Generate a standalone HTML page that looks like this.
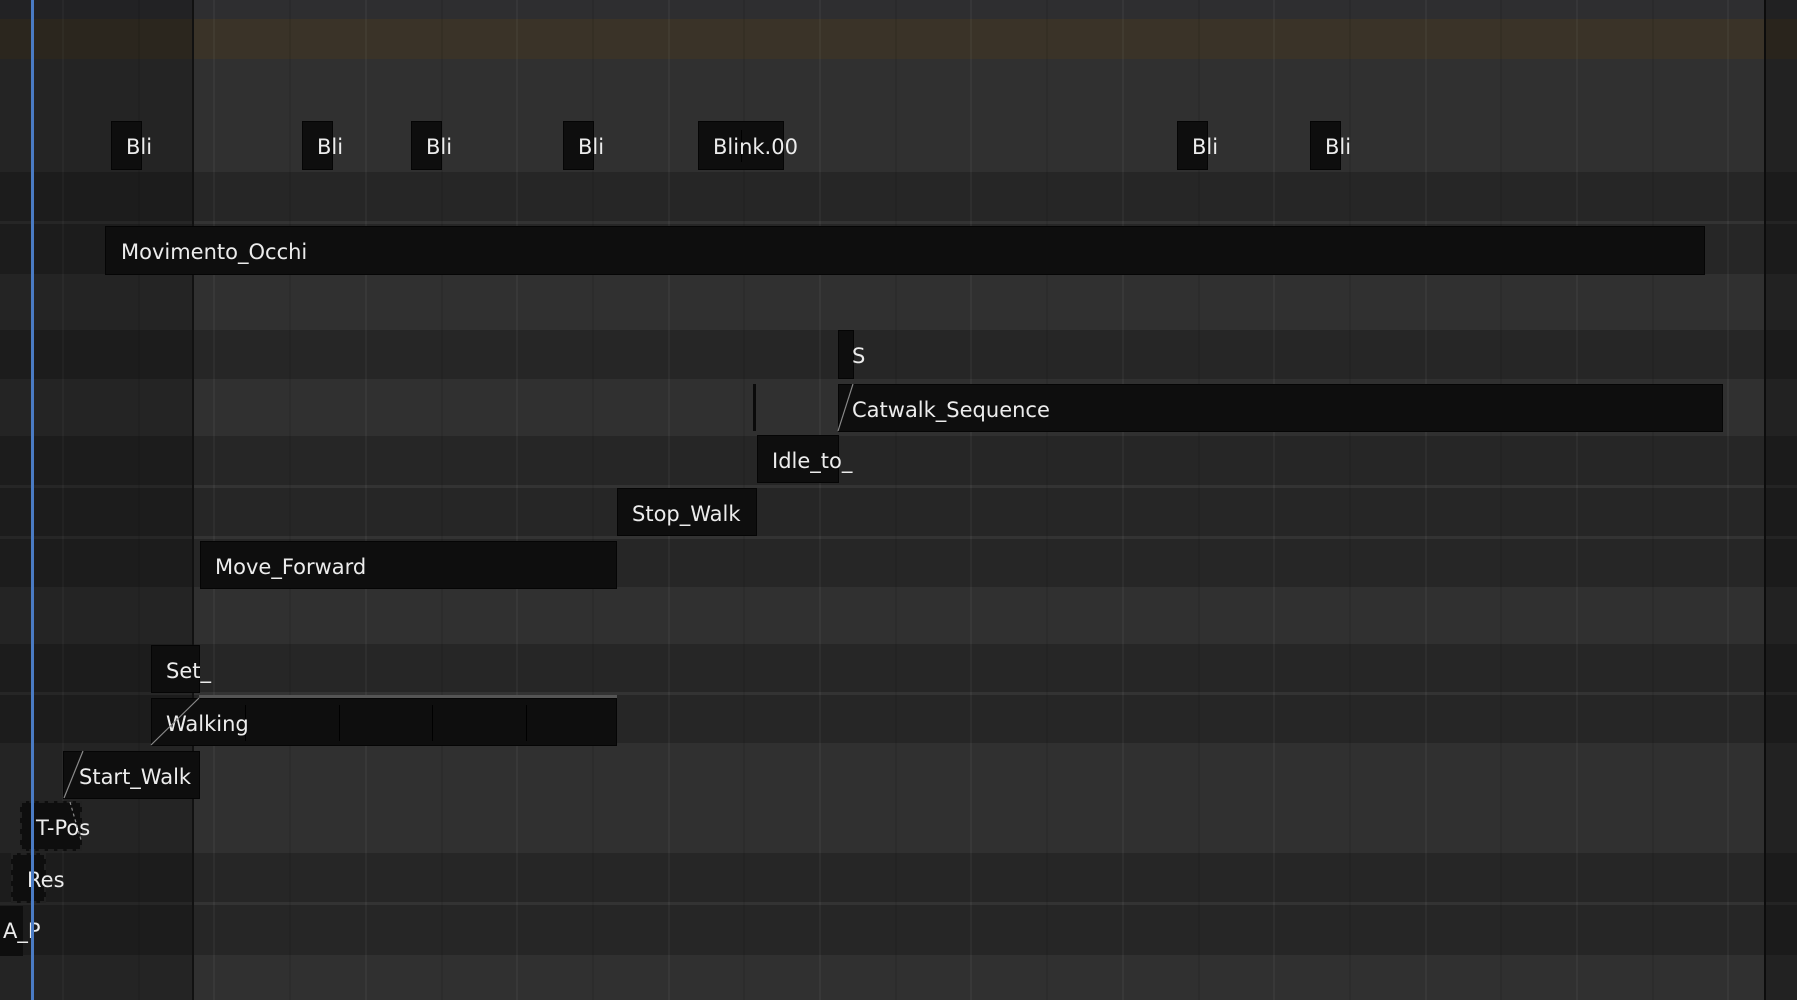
<!DOCTYPE html>
<html><head><meta charset="utf-8"><style>
*{margin:0;padding:0;box-sizing:border-box}
body{width:1797px;height:1000px;overflow:hidden;background:#303030;position:relative;font-family:"DejaVu Sans","Liberation Sans",sans-serif}
.a{position:absolute}
.band{position:absolute;left:0;width:1797px}
.d{background:#262626}
.gl{position:absolute;top:0;height:1000px;width:2px}
.s{position:absolute;background:#0e0e0e;border:1px solid #050505;color:#ececec;font-size:21px;white-space:nowrap;overflow:visible}
.s span{position:absolute;top:0;line-height:50px}
.sep{position:absolute;left:0;width:1797px;height:3px;background:#333}
</style></head><body>
<div class="band" style="top:0;height:19px;background:#2e2e30"></div>
<div class="band" style="top:19px;height:40px;background:#3a3328"></div>
<div class="band d" style="top:172px;height:50px"></div>
<div class="band d" style="top:224px;height:50px"></div>
<div class="band d" style="top:330px;height:49px"></div>
<div class="band d" style="top:436px;height:49px"></div>
<div class="band d" style="top:488px;height:48px"></div>
<div class="band d" style="top:539px;height:48px"></div>
<div class="band d" style="top:644px;height:48px"></div>
<div class="band d" style="top:695px;height:48px"></div>
<div class="band d" style="top:853px;height:49px"></div>
<div class="band d" style="top:905px;height:50px"></div>
<div class="sep" style="top:221px"></div>
<div class="sep" style="top:485px"></div>
<div class="sep" style="top:536px"></div>
<div class="sep" style="top:692px"></div>
<div class="sep" style="top:902px"></div>

<div class="gl" style="left:62px;background:rgba(255,255,255,0.04)"></div>
<div class="gl" style="left:138px;background:rgba(0,0,0,0.08)"></div>
<div class="gl" style="left:213px;background:rgba(255,255,255,0.04)"></div>
<div class="gl" style="left:289px;background:rgba(0,0,0,0.08)"></div>
<div class="gl" style="left:365px;background:rgba(255,255,255,0.04)"></div>
<div class="gl" style="left:441px;background:rgba(0,0,0,0.08)"></div>
<div class="gl" style="left:516px;background:rgba(255,255,255,0.04)"></div>
<div class="gl" style="left:592px;background:rgba(0,0,0,0.08)"></div>
<div class="gl" style="left:668px;background:rgba(255,255,255,0.04)"></div>
<div class="gl" style="left:743px;background:rgba(0,0,0,0.08)"></div>
<div class="gl" style="left:819px;background:rgba(255,255,255,0.04)"></div>
<div class="gl" style="left:895px;background:rgba(0,0,0,0.08)"></div>
<div class="gl" style="left:970px;background:rgba(255,255,255,0.04)"></div>
<div class="gl" style="left:1046px;background:rgba(0,0,0,0.08)"></div>
<div class="gl" style="left:1122px;background:rgba(255,255,255,0.04)"></div>
<div class="gl" style="left:1198px;background:rgba(0,0,0,0.08)"></div>
<div class="gl" style="left:1273px;background:rgba(255,255,255,0.04)"></div>
<div class="gl" style="left:1349px;background:rgba(0,0,0,0.08)"></div>
<div class="gl" style="left:1425px;background:rgba(255,255,255,0.04)"></div>
<div class="gl" style="left:1500px;background:rgba(0,0,0,0.08)"></div>
<div class="gl" style="left:1576px;background:rgba(255,255,255,0.04)"></div>
<div class="gl" style="left:1652px;background:rgba(0,0,0,0.08)"></div>
<div class="gl" style="left:1727px;background:rgba(255,255,255,0.04)"></div>

<!-- dim overlays (background only) -->
<div class="a" style="left:0;top:0;width:193px;height:1000px;background:rgba(0,0,0,0.25)"></div>
<div class="a" style="left:192px;top:0;width:2px;height:1000px;background:#111"></div>
<div class="a" style="left:1766px;top:0;width:31px;height:1000px;background:rgba(0,0,0,0.28)"></div>
<div class="a" style="left:1764px;top:0;width:2px;height:1000px;background:#0c0c0c"></div>

<!-- strips -->
<div class="s" style="left:111px;top:121px;width:31px;height:49px"><span style="left:14px">Bli</span></div>
<div class="s" style="left:302px;top:121px;width:31px;height:49px"><span style="left:14px">Bli</span></div>
<div class="s" style="left:411px;top:121px;width:31px;height:49px"><span style="left:14px">Bli</span></div>
<div class="s" style="left:563px;top:121px;width:31px;height:49px"><span style="left:14px">Bli</span></div>
<div class="s" style="left:698px;top:121px;width:86px;height:49px"><div class="a" style="left:42px;top:8px;width:1px;height:32px;background:#000"></div><span style="left:14px">Blink.00</span></div>
<div class="s" style="left:1177px;top:121px;width:31px;height:49px"><span style="left:14px">Bli</span></div>
<div class="s" style="left:1310px;top:121px;width:31px;height:49px"><span style="left:14px">Bli</span></div>

<div class="s" style="left:105px;top:226px;width:1600px;height:49px"><span style="left:15px">Movimento_Occhi</span></div>

<div class="s" style="left:838px;top:330px;width:16px;height:49px"><span style="left:13px">S</span></div>
<div class="a" style="left:753px;top:384px;width:3px;height:47px;background:#0a0a0a"></div>
<div class="s" style="left:838px;top:384px;width:885px;height:48px"><span style="left:13px">Catwalk_Sequence</span></div>
<div class="s" style="left:757px;top:435px;width:82px;height:48px"><span style="left:14px">Idle_to_</span></div>
<div class="s" style="left:617px;top:488px;width:140px;height:48px"><span style="left:14px">Stop_Walk</span></div>
<div class="s" style="left:200px;top:541px;width:417px;height:48px"><span style="left:14px">Move_Forward</span></div>
<div class="s" style="left:151px;top:645px;width:49px;height:48px"><span style="left:14px">Set_</span></div>
<div class="a" style="left:199px;top:695px;width:418px;height:3px;background:#555"></div>
<div class="s" style="left:151px;top:698px;width:466px;height:48px">
<div class="a" style="left:93px;top:6px;width:1px;height:36px;background:#000"></div>
<div class="a" style="left:187px;top:6px;width:1px;height:36px;background:#000"></div>
<div class="a" style="left:280px;top:6px;width:1px;height:36px;background:#000"></div>
<div class="a" style="left:374px;top:6px;width:1px;height:36px;background:#000"></div>
<span style="left:14px">Walking</span></div>
<div class="s" style="left:63px;top:751px;width:137px;height:48px"><span style="left:15px">Start_Walk</span></div>
<div class="s" style="left:20px;top:801px;width:62px;height:50px;border:2px dashed #222"><span style="left:14px">T-Pos</span></div>
<div class="s" style="left:11px;top:853px;width:35px;height:50px;border:2px dashed #222"><span style="left:14px">Res</span></div>
<div class="s" style="left:0;top:906px;width:23px;height:50px;border:none"><span style="left:3px">A_P</span></div>

<svg class="a" style="left:0;top:0" width="1797" height="1000">
<g stroke="#8a8a8a" stroke-width="1.2">
<line x1="838" y1="431" x2="853" y2="384"/>
<line x1="151" y1="745" x2="199" y2="698"/>
<line x1="64" y1="798" x2="83" y2="751"/>
<line x1="70" y1="802" x2="81" y2="840" stroke-dasharray="3 3"/>
</g>
</svg>

<div class="a" style="left:31px;top:0;width:3px;height:1000px;background:#4a7bc4"></div>
</body></html>
